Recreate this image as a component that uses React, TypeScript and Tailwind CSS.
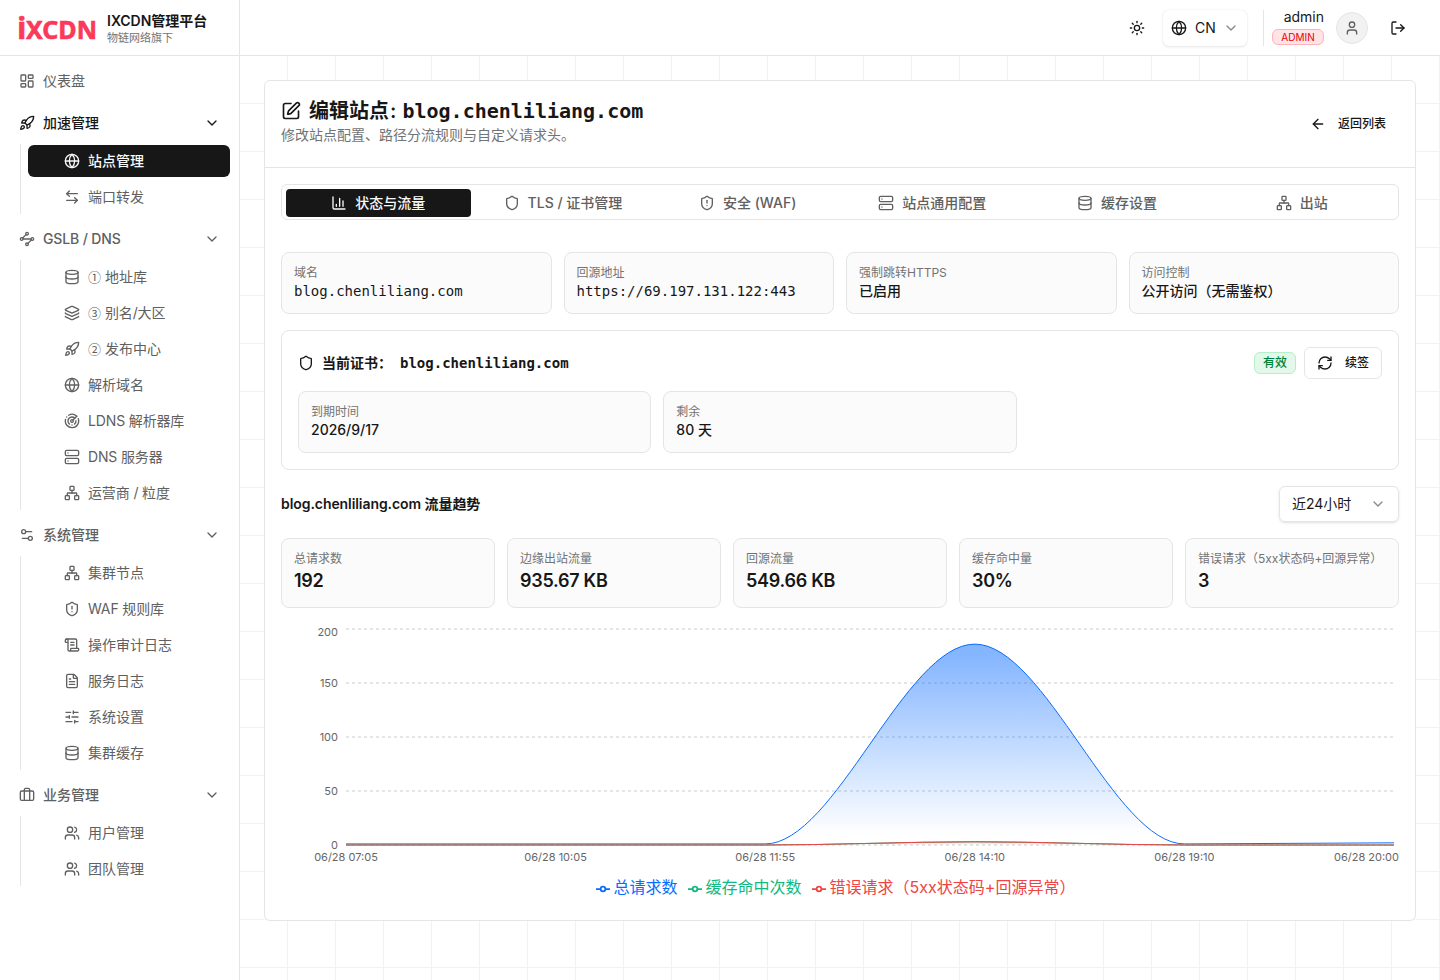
import type { ComponentType, ReactNode } from 'react';
import {
  ArrowLeft,
  ArrowLeftRight,
  ChevronDown,
  Database,
  FileText,
  Globe,
  Layers,
  LayoutDashboard,
  LogOut,
  Network,
  Radar,
  RefreshCw,
  Rocket,
  ScrollText,
  Server,
  Settings2,
  Shield,
  ShieldAlert,
  SlidersHorizontal,
  SquarePen,
  Sun,
  User,
  Users,
} from 'lucide-react';

interface NavItem {
  label: string;
  icon: ComponentType<{ className?: string }>;
  step?: string;
  active?: boolean;
}

interface NavGroup extends NavItem {
  items: NavItem[];
}

function StrokeIcon({ className, children }: { className?: string; children: ReactNode }) {
  return (
    <svg className={className} viewBox="0 0 24 24" fill="none" stroke="currentColor" strokeWidth="2" strokeLinecap="round" strokeLinejoin="round">
      {children}
    </svg>
  );
}

function LuggageIcon({ className }: { className?: string }) {
  return (
    <StrokeIcon className={className}>
      <path d="M16 20V4a2 2 0 0 0-2-2h-4a2 2 0 0 0-2 2v16" />
      <rect width="20" height="14" x="2" y="6" rx="2" />
    </StrokeIcon>
  );
}

function ChartIcon({ className }: { className?: string }) {
  return (
    <StrokeIcon className={className}>
      <path d="M3 3v16a2 2 0 0 0 2 2h16M18 17V9M13 17V5M8 17v-3" />
    </StrokeIcon>
  );
}

function RouteIcon({ className }: { className?: string }) {
  return (
    <StrokeIcon className={className}>
      <path d="m10.586 5.414-5.172 5.172" />
      <path d="m18.586 13.414-5.172 5.172" />
      <path d="M6 12h12" />
      <circle cx="12" cy="20" r="2" />
      <circle cx="12" cy="4" r="2" />
      <circle cx="20" cy="12" r="2" />
      <circle cx="4" cy="12" r="2" />
    </StrokeIcon>
  );
}

const NAV: NavGroup[] = [
  {
    label: '加速管理',
    icon: Rocket,
    active: true,
    items: [
      { label: '站点管理', icon: Globe, active: true },
      { label: '端口转发', icon: ArrowLeftRight },
    ],
  },
  {
    label: 'GSLB / DNS',
    icon: RouteIcon,
    items: [
      { step: '①', label: '地址库', icon: Database },
      { step: '③', label: '别名/大区', icon: Layers },
      { step: '②', label: '发布中心', icon: Rocket },
      { label: '解析域名', icon: Globe },
      { label: 'LDNS 解析器库', icon: Radar },
      { label: 'DNS 服务器', icon: Server },
      { label: '运营商 / 粒度', icon: Network },
    ],
  },
  {
    label: '系统管理',
    icon: Settings2,
    items: [
      { label: '集群节点', icon: Network },
      { label: 'WAF 规则库', icon: ShieldAlert },
      { label: '操作审计日志', icon: ScrollText },
      { label: '服务日志', icon: FileText },
      { label: '系统设置', icon: SlidersHorizontal },
      { label: '集群缓存', icon: Database },
    ],
  },
  {
    label: '业务管理',
    icon: LuggageIcon,
    items: [
      { label: '用户管理', icon: Users },
      { label: '团队管理', icon: Users },
    ],
  },
];

const TABS: NavItem[] = [
  { label: '状态与流量', icon: ChartIcon, active: true },
  { label: 'TLS / 证书管理', icon: Shield },
  { label: '安全 (WAF)', icon: ShieldAlert },
  { label: '站点通用配置', icon: Server },
  { label: '缓存设置', icon: Database },
  { label: '出站', icon: Network },
];

const STATS = [
  { label: '总请求数', value: '192' },
  { label: '边缘出站流量', value: '935.67 KB' },
  { label: '回源流量', value: '549.66 KB' },
  { label: '缓存命中量', value: '30%' },
  { label: '错误请求（5xx状态码+回源异常）', value: '3' },
];

const TIMES = ['06/28 07:05', '06/28 10:05', '06/28 11:55', '06/28 14:10', '06/28 19:10', '06/28 20:00'];

const SERIES = [
  { name: '总请求数', color: '#0a6cff', opacity: 0.5, values: [1, 1, 1, 186, 1, 2] },
  { name: '缓存命中次数', color: '#10b981', opacity: 0.15, values: [0, 0, 0, 3, 0, 0] },
  { name: '错误请求（5xx状态码+回源异常）', color: '#ef4444', opacity: 0.15, values: [0, 0, 0, 3, 0, 0] },
];

// Labels that mix in Latin letters are set slightly tighter
const tracking = (label: string) => (/[A-Z/]/.test(label) ? 'tracking-[-0.01em]' : '');

function Sidebar() {
  return (
    <aside className="flex w-60 shrink-0 flex-col border-r border-[#e5e5e5] bg-white">
      <div className="flex h-14 items-center border-b border-[#e5e5e5] pl-[18px]">
        <svg width="80" height="36" viewBox="0 0 80 36" className="shrink-0 overflow-visible">
          <g fontFamily="'Noto Sans', sans-serif" fontWeight="700" fill="#fb3958" stroke="#fb3958" strokeWidth="0.6">
            <text x="-0.8" y="29" fontSize="30">i</text>
            <text x="8" y="29" fontSize="25" textLength="71" lengthAdjust="spacingAndGlyphs">XCDN</text>
          </g>
        </svg>
        <div className="mt-[2px] ml-[9px]">
          <p className="text-sm leading-[18px] font-semibold text-[#171717]">IXCDN管理平台</p>
          <p className="text-[11px] leading-4 text-[#737373]">物链网络旗下</p>
        </div>
      </div>

      <nav className="flex flex-col pt-[7px] text-sm text-[#606060]">
        <a className="mb-1.5 flex h-9 items-center gap-2 pl-[19px]">
          <LayoutDashboard className="size-4" />
          仪表盘
        </a>
        {NAV.map((group) => (
          <div key={group.label} className="mb-[7px]">
            <div className={`flex h-9 items-center gap-2 pr-[19px] pl-[19px] font-medium ${group.active ? 'text-[#171717]' : ''}`}>
              <group.icon className="size-4" />
              <span className={`flex-1 ${tracking(group.label)}`}>{group.label}</span>
              <ChevronDown className="size-4" />
            </div>
            <div className="mt-[3px] ml-5 flex flex-col gap-1 border-l border-[#e5e5e5] py-px pr-[9px] pl-[7px]">
              {group.items.map((item) => (
                <a
                  key={item.label}
                  className={`flex h-8 items-center rounded-md pl-9 ${item.active ? 'bg-[#171717] font-medium text-[#fafafa]' : ''}`}
                >
                  <item.icon className="mr-2 size-4" />
                  {item.step && (
                    <span className="mr-1 w-[13px] font-['Noto_Sans_CJK_SC',sans-serif] text-[13px]">{item.step}</span>
                  )}
                  <span className={tracking(item.label)}>{item.label}</span>
                </a>
              ))}
            </div>
          </div>
        ))}
      </nav>
    </aside>
  );
}

function Header() {
  return (
    <header className="flex h-14 shrink-0 items-center justify-end border-b border-[#e5e5e5] bg-white pr-[34px] text-[#171717]">
      <Sun className="mr-[18px] size-4" />
      <div className="mr-4 flex h-9 w-[84px] items-center rounded-md px-2 text-sm shadow-[0_1px_3px_rgba(0,0,0,0.1),0_0_1px_rgba(0,0,0,0.1)]">
        <Globe className="size-4" />
        <span className="ml-2 flex-1">CN</span>
        <ChevronDown className="size-4 opacity-50" />
      </div>
      <div className="flex h-9 items-center border-l border-[#e5e5e5] pl-2">
        <div className="-mt-1 flex flex-col items-end">
          <span className="text-sm leading-5">admin</span>
          <span className="mt-0.5 flex h-4 w-[52px] items-center justify-center rounded-md border border-[#ffb3ba] bg-[#ffe3e5] text-[10px] leading-none text-[#e7000b]">
            ADMIN
          </span>
        </div>
        <span className="ml-3 flex size-8 items-center justify-center rounded-full border border-[#e5e5e5] bg-[#f2f2f2] text-[#606060]">
          <User className="size-4" />
        </span>
        <LogOut className="ml-[22px] size-4" />
      </div>
    </header>
  );
}

function InfoCard({ label, children, mono }: { label: string; children: ReactNode; mono?: boolean }) {
  return (
    <div className="rounded-lg border border-[#e5e5e5] bg-[#fbfbfb] p-3">
      <p className="text-xs text-[#737373]">{label}</p>
      <p className={mono ? "font-['DejaVu_Sans_Mono',monospace] text-sm" : 'text-sm font-medium'}>{children}</p>
    </div>
  );
}

const LEFT = 65;
const RIGHT = 1113;
const BASE = 221;
const xAt = (i: number) => LEFT + ((RIGHT - LEFT) / 5) * i;
const yAt = (v: number) => BASE - v * 1.08;

// Points are joined with flat tangents, which keeps the curve monotone
function linePath(values: number[]) {
  const third = (RIGHT - LEFT) / 15;
  return values
    .map((v, i) =>
      i === 0
        ? `M${xAt(0)},${yAt(v)}`
        : `C${xAt(i - 1) + third},${yAt(values[i - 1])},${xAt(i) - third},${yAt(v)},${xAt(i)},${yAt(v)}`,
    )
    .join('');
}

function TrafficChart() {
  return (
    <div className="mt-4 h-[280px]">
      <svg width="1118" height="251" className="block text-[11px]">
        <defs>
          {SERIES.map((s, i) => (
            <linearGradient key={s.name} id={`fill${i}`} x1="0" y1="0" x2="0" y2="1">
              <stop offset="5%" stopColor={s.color} stopOpacity={s.opacity} />
              <stop offset="95%" stopColor={s.color} stopOpacity={0} />
            </linearGradient>
          ))}
        </defs>
        {[0, 50, 100, 150, 200].map((v) => (
          <g key={v}>
            <line x1={LEFT} x2={RIGHT} y1={yAt(v)} y2={yAt(v)} stroke="#ccc" strokeDasharray="3 3" />
            <text x="57" y={v === 200 ? 12 : yAt(v) + 4} textAnchor="end" fill="#666">
              {v}
            </text>
          </g>
        ))}
        {SERIES.map((s, i) => (
          <g key={s.name}>
            <path d={`${linePath(s.values)}L${RIGHT},${BASE}L${LEFT},${BASE}Z`} fill={`url(#fill${i})`} />
            <path d={linePath(s.values)} fill="none" stroke={s.color} />
          </g>
        ))}
        {TIMES.map((t, i) => (
          <text key={t} x={i === 5 ? 1118 : xAt(i)} y="237" textAnchor={i === 5 ? 'end' : 'middle'} fill="#666">
            {t}
          </text>
        ))}
      </svg>
      <div className="flex justify-center gap-2.5 pr-[9px] text-base leading-6">
        {SERIES.map((s) => (
          <span key={s.name} className="flex items-center gap-1" style={{ color: s.color }}>
            <svg width="14" height="14" viewBox="0 0 32 32" className="mt-[3px]" fill="none" stroke="currentColor" strokeWidth="4">
              <path d="M0,16h10.667A5.333,5.333,0,1,1,21.333,16H32M21.333,16A5.333,5.333,0,1,1,10.667,16" />
            </svg>
            {s.name}
          </span>
        ))}
      </div>
    </div>
  );
}

function SiteEditor() {
  return (
    <section className="rounded-md border border-[#e5e5e5] bg-white text-[#171717]">
      <div className="flex h-[87px] items-center justify-between border-b border-[#e5e5e5] px-4">
        <div className="-mt-[6px]">
          <h1 className="flex items-center gap-2 text-xl leading-7 font-semibold">
            <SquarePen className="size-5" />
            <span>
              编辑站点<span className="ml-px">:</span>{' '}
              <span className="ml-px font-['DejaVu_Sans_Mono',monospace]">blog.chenliliang.com</span>
            </span>
          </h1>
          <p className="text-sm text-[#737373]">修改站点配置、路径分流规则与自定义请求头。</p>
        </div>
        <button className="flex items-center gap-3 pr-[13px] text-xs font-medium">
          <ArrowLeft className="size-4" />
          返回列表
        </button>
      </div>

      <div className="p-4">
        <div className="grid h-9 grid-cols-6 items-start rounded-md border border-[#e5e5e5] p-1">
          {TABS.map((tab) => (
            <button
              key={tab.label}
              className={`flex h-7 items-center justify-center gap-2 rounded text-sm font-medium ${tab.active ? 'bg-[#171717] text-[#fafafa]' : 'text-[#606060]'}`}
            >
              <tab.icon className="size-4" />
              {tab.label}
            </button>
          ))}
        </div>

        <div className="mt-8 grid grid-cols-4 gap-3">
          <InfoCard label="域名" mono>blog.chenliliang.com</InfoCard>
          <InfoCard label="回源地址" mono>https://69.197.131.122:443</InfoCard>
          <InfoCard label="强制跳转HTTPS">已启用</InfoCard>
          <InfoCard label="访问控制">公开访问（无需鉴权）</InfoCard>
        </div>

        <div className="mt-4 rounded-lg border border-[#e5e5e5] p-4">
          <div className="flex h-8 items-center gap-2 text-sm font-medium">
            <Shield className="size-4" />
            <span className="font-semibold">当前证书：</span>
            <span className="flex-1 font-['DejaVu_Sans_Mono',monospace] font-semibold">blog.chenliliang.com</span>
            <span className="flex h-[22px] items-center rounded-md border border-[#b3efc8] bg-[#e3f8ea] px-2 text-xs text-[#008236]">有效</span>
            <button className="flex h-8 items-center gap-3 rounded-md border border-[#e5e5e5] px-3 text-xs">
              <RefreshCw className="size-4" />
              续签
            </button>
          </div>
          <div className="mt-3 grid grid-cols-3 gap-3">
            <InfoCard label="到期时间">2026/9/17</InfoCard>
            <InfoCard label="剩余">80 天</InfoCard>
          </div>
        </div>

        <div className="mt-4 flex h-9 items-center justify-between">
          <h2 className="text-sm font-semibold tracking-[-0.005em]">blog.chenliliang.com 流量趋势</h2>
          <div className="flex h-9 w-[120px] items-center justify-between rounded-md border border-[#e5e5e5] px-3 text-sm shadow-sm">
            近24小时
            <ChevronDown className="size-4 opacity-50" />
          </div>
        </div>

        <div className="mt-4 grid grid-cols-5 gap-3">
          {STATS.map((stat) => (
            <div key={stat.label} className="rounded-lg border border-[#e5e5e5] bg-[#fbfbfb] p-3">
              <p className="text-xs whitespace-nowrap text-[#737373]">{stat.label}</p>
              <p className="text-lg leading-7 font-semibold tracking-[-0.015em]">{stat.value}</p>
            </div>
          ))}
        </div>

        <TrafficChart />
      </div>
    </section>
  );
}

export default function App() {
  return (
    <div className="flex h-[980px] w-[1440px] overflow-hidden bg-white font-['Inter','Noto_Sans_CJK_SC',sans-serif]">
      <Sidebar />
      <div className="flex min-w-0 flex-1 flex-col">
        <Header />
        <main className="flex-1 bg-[linear-gradient(to_right,transparent_47px,#f2f2f2_47px),linear-gradient(to_bottom,transparent_47px,#f2f2f2_47px)] bg-[size:48px_48px] p-6">
          <SiteEditor />
        </main>
      </div>
    </div>
  );
}
